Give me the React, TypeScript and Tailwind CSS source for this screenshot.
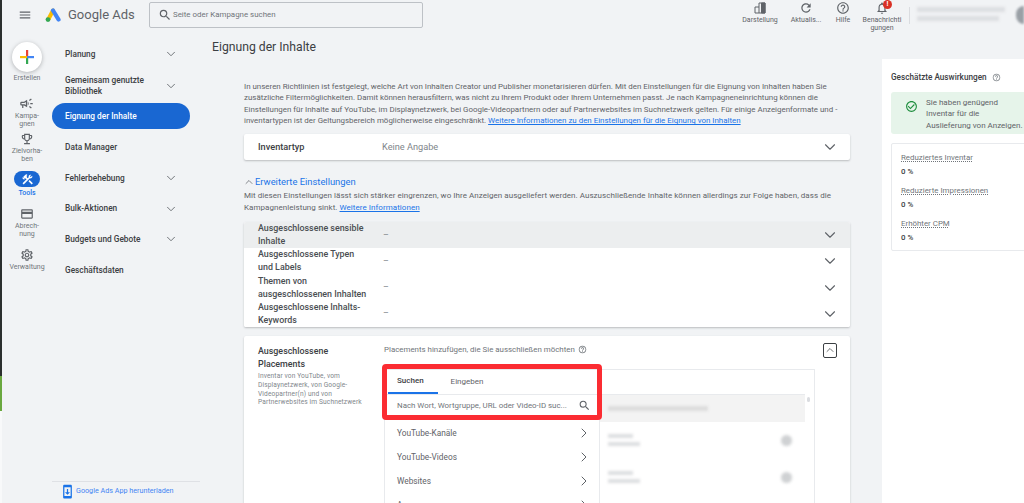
import { ChevronDown, ChevronRight, ChevronUp } from "lucide-react";
import {
  MdCheckCircleOutline,
  MdConstruction,
  MdCreditCard,
  MdHelpOutline,
  MdMenu,
  MdOutlineCampaign,
  MdOutlineEmojiEvents,
  MdOutlineNotifications,
  MdOutlineSettings,
  MdRefresh,
  MdSearch,
  MdSystemUpdate,
} from "react-icons/md";
import type { ReactNode } from "react";

const navItems = [
  { label: "Planung", cls: "h-[24px]", chevron: true },
  { label: "Gemeinsam genutzte Bibliothek", cls: "h-[37px] pt-[2px]", chevron: true },
  { label: "Eignung der Inhalte", cls: "h-[26px]", active: true },
  { label: "Data Manager", cls: "mt-[3px] h-[30.7px]" },
  { label: "Fehlerbehebung", cls: "h-[30.7px]", chevron: true },
  { label: "Bulk-Aktionen", cls: "h-[30.7px]", chevron: true },
  { label: "Budgets und Gebote", cls: "h-[30.7px]", chevron: true },
  { label: "Geschäftsdaten", cls: "h-[30.7px]" },
];

const railItems = [
  { icon: <MdOutlineCampaign size={15} />, label: <>Kampa-<br />gnen</>, cls: "mt-[14px]" },
  { icon: <MdOutlineEmojiEvents size={14} />, label: <>Zielvorha-<br />ben</>, cls: "mt-[3px]" },
  { icon: <MdConstruction size={13} />, label: "Tools", cls: "mt-[8px]", active: true },
  { icon: <MdCreditCard size={14} />, label: <>Abrech-<br />nung</>, cls: "mt-[9px]" },
  { icon: <MdOutlineSettings size={14} />, label: "Verwaltung", cls: "mt-[9px]" },
];

const excluded = [
  { a: "Ausgeschlossene sensible", b: "Inhalte", shaded: true },
  { a: "Ausgeschlossene Typen", b: "und Labels" },
  { a: "Themen von", b: "ausgeschlossenen Inhalten" },
  { a: "Ausgeschlossene Inhalts-", b: "Keywords" },
];

const impacts = ["Reduziertes Inventar", "Reduzierte Impressionen", "Erhöhter CPM"];

function TopAction({ icon, label, cls }: { icon: ReactNode; label: ReactNode; cls: string }) {
  return (
    <div className={`flex flex-col items-center text-center text-[7px] leading-[8px] text-[#5f6368] ${cls}`}>
      <div className="flex h-[14px] items-center justify-center">{icon}</div>
      <div className="mt-[1px] whitespace-nowrap">{label}</div>
    </div>
  );
}

function PlacementRow({ label }: { label: string }) {
  return (
    <div className="flex h-[24px] shrink-0 items-center justify-between pr-[7px] pl-[12px] text-[8.3px] text-[#5f6368]">
      <span>{label}</span>
      <ChevronRight className="h-[16px] w-[16px] text-[#5f6368]" strokeWidth={1.5} />
    </div>
  );
}

// the reference has these rows blurred out
function BlurRow() {
  return (
    <div className="flex h-[37px] items-center justify-between pr-[13px] pl-[8px] blur-[1.5px]">
      <div className="flex flex-col gap-[4px]">
        <div className="h-[4px] w-[25px] bg-[#dcdee0]" />
        <div className="h-[4px] w-[32px] bg-[#dcdee0]" />
      </div>
      <div className="h-[11px] w-[11px] rounded-full bg-[#cfd1d3]" />
    </div>
  );
}

export default function App() {
  return (
    <div className="flex h-[503px] w-[1024px] overflow-hidden bg-[#f1f3f5] font-['Roboto',sans-serif]">
      <div className="flex w-[2px] shrink-0 flex-col">
        <div className="h-[376px] bg-[#2b2f2e]" />
        <div className="h-[35px] bg-[#6aa83f]" />
        <div className="flex-1 bg-[#f8f9fa]" />
      </div>
      <div className="flex min-w-0 flex-1 flex-col">
        {/* top bar */}
        <header className="flex h-[39px] shrink-0 items-start pt-[1px]">
          <div className="flex h-[28px] w-[147px] shrink-0 items-center pl-[16px]">
            <MdMenu size={14} className="text-[#5f6368]" />
            <svg viewBox="0 0 16 14" className="ml-[13px] h-[14px] w-[16px]" aria-hidden>
              <path d="M8 2.5 L3.5 11" stroke="#fbbc04" strokeWidth="4" strokeLinecap="round" />
              <path d="M8 2.5 L13.5 11.5" stroke="#4285f4" strokeWidth="4.2" strokeLinecap="round" />
              <circle cx="3" cy="11.6" r="2.4" fill="#34a853" />
            </svg>
            <span className="ml-[7px] text-[13px] whitespace-nowrap text-[#5f6368]">Google Ads</span>
          </div>
          <div className="mt-[1px] flex h-[26px] w-[274px] shrink-0 items-center rounded-[2px] border border-[#bdc1c6] pl-[8px] text-[7.9px] text-[#70757a]">
            <MdSearch size={14} className="mr-[1px] text-[#5f6368]" />
            Seite oder Kampagne suchen
          </div>
          <div className="ml-auto flex items-start">
            <TopAction
              cls="w-[40px]"
              label="Darstellung"
              icon={
                <svg viewBox="0 0 12 12" className="h-[12px] w-[12px] fill-none stroke-[#5f6368]" aria-hidden>
                  <path d="M1 11V5h4V1h6v10z M5 5v6" strokeWidth="1" />
                  <path d="M7.5 1h3.5v10H7.5z" fill="#5f6368" />
                </svg>
              }
            />
            <TopAction cls="ml-[6px] w-[40px]" icon={<MdRefresh size={14} />} label="Aktualis..." />
            <TopAction cls="-ml-[3px] w-[40px]" icon={<MdHelpOutline size={14} />} label="Hilfe" />
            <div className="relative -ml-[2px] w-[42px]">
              <TopAction
                cls="w-[42px]"
                icon={<MdOutlineNotifications size={14} />}
                label={<>Benachrichti<br />gungen</>}
              />
              <div className="absolute -top-[1px] left-[22px] flex h-[9px] w-[9px] items-center justify-center rounded-full bg-[#d93025] text-[7px] leading-none font-bold text-white">
                !
              </div>
            </div>
            <div className="mt-[6px] ml-[6px] h-[17px] w-px bg-[#dadce0]" />
            <div className="mt-[6px] ml-[7px] flex w-[88px] flex-col gap-[4px] blur-[1.5px]">
              <div className="h-[5px] w-[88px] bg-[#dcdee1]" />
              <div className="h-[5px] w-[82px] bg-[#dcdee1]" />
            </div>
            <div className="mt-[5px] ml-[11px] h-[18px] w-[8px] rounded-l-full bg-[#9aa0a6] blur-[1px]" />
          </div>
        </header>

        <div className="flex min-h-0 flex-1">
          {/* icon rail */}
          <aside className="mt-[3px] flex w-[50px] shrink-0 flex-col items-center">
            <div className="flex h-[30px] w-[30px] items-center justify-center rounded-full bg-white shadow-[0_1px_4px_rgba(60,64,67,0.35)]">
              <svg viewBox="0 0 14 14" className="h-[14px] w-[14px]" aria-hidden>
                <rect x="6" y="0" width="2.2" height="7" fill="#ea4335" />
                <rect x="6" y="7" width="2.2" height="7" fill="#34a853" />
                <rect x="0" y="6" width="7" height="2.2" fill="#fbbc04" />
                <rect x="7" y="6" width="7" height="2.2" fill="#4285f4" />
              </svg>
            </div>
            <div className="mt-[2px] text-[7px] leading-[8px] text-[#70757a]">Erstellen</div>
            {railItems.map((item, i) => (
              <div key={i} className={`flex flex-col items-center text-center ${item.cls}`}>
                <div
                  className={
                    item.active
                      ? "flex h-[16px] w-[26px] items-center justify-center rounded-full bg-[#1967d2] text-white"
                      : "flex h-[15px] items-center justify-center text-[#5f6368]"
                  }
                >
                  {item.icon}
                </div>
                <div
                  className={
                    item.active
                      ? "mt-[2px] text-[7px] leading-[8px] font-medium text-[#1a73e8]"
                      : "mt-[1px] text-[7px] leading-[8px] text-[#70757a]"
                  }
                >
                  {item.label}
                </div>
              </div>
            ))}
          </aside>

          {/* section nav */}
          <nav className="mt-[3px] flex w-[148px] shrink-0 flex-col">
            {navItems.map((item) =>
              item.active ? (
                <div
                  key={item.label}
                  className="flex h-[26px] w-[138px] shrink-0 items-center rounded-full bg-[#1967d2] pl-[13px] text-[8.3px] font-medium text-white"
                >
                  {item.label}
                </div>
              ) : (
                <div
                  key={item.label}
                  className={`flex ${item.cls} w-[126px] shrink-0 items-center justify-between pl-[13px] text-[8.3px] leading-[11px] font-medium text-[#3c4043]`}
                >
                  <span className={item.chevron ? "max-w-[90px]" : ""}>{item.label}</span>
                  {item.chevron && <ChevronDown className="h-[14px] w-[14px] text-[#5f6368]" strokeWidth={1.5} />}
                </div>
              ),
            )}
            <div className="mt-auto flex h-[22px] items-center gap-[1px] border-t border-[#dfe1e5] pb-[2px] pl-[8px] text-[7.2px] text-[#4285f4]">
              <MdSystemUpdate size={15} className="text-[#1a73e8]" />
              Google Ads App herunterladen
            </div>
          </nav>

          {/* main content */}
          <main className="w-[682px] shrink-0 pl-[44px]">
            <h1 className="-ml-[32px] text-[12.2px] leading-[16px] text-[#3c4043]">Eignung der Inhalte</h1>
            <p className="mt-[26px] w-[596px] text-[7.93px] leading-[11.4px] text-[#5f6368]">
              In unseren Richtlinien ist festgelegt, welche Art von Inhalten Creator und Publisher monetarisieren dürfen. Mit den Einstellungen für die Eignung von Inhalten haben Sie zusätzliche Filtermöglichkeiten. Damit können herausfiltern, was nicht zu Ihrem Produkt oder Ihrem Unternehmen passt. Je nach Kampagneneinrichtung können die Einstellungen für Inhalte auf YouTube, im Displaynetzwerk, bei Google-Videopartnern oder auf Partnerwebsites im Suchnetzwerk gelten. Für einige Anzeigenformate und -inventartypen ist der Geltungsbereich möglicherweise eingeschränkt.{" "}
              <span className="text-[#1a73e8] underline">Weitere Informationen zu den Einstellungen für die Eignung von Inhalten</span>
            </p>

            <div className="mt-[7px] flex h-[26px] w-[606px] items-center rounded-[2px] bg-white pr-[11px] pl-[14px] text-[9.2px] shadow-[0_1px_2px_rgba(60,64,67,0.3)]">
              <span className="w-[124px] font-medium text-[#3c4043]">Inventartyp</span>
              <span className="flex-1 text-[#80868b]">Keine Angabe</span>
              <ChevronDown className="h-[18px] w-[18px] text-[#5f6368]" strokeWidth={1.5} />
            </div>

            <div className="mt-[16px] flex h-[12px] items-center">
              <ChevronUp className="-ml-[1px] h-[12px] w-[12px] shrink-0 text-[#5f6368]" strokeWidth={1.5} />
              <span className="text-[9.4px] text-[#1a73e8]">Erweiterte Einstellungen</span>
            </div>
            <p className="mt-[2.5px] w-[596px] text-[8px] leading-[11.4px] tracking-[0.05px] text-[#5f6368]">
              Mit diesen Einstellungen lässt sich stärker eingrenzen, wo Ihre Anzeigen ausgeliefert werden. Auszuschließende Inhalte können allerdings zur Folge haben, dass die Kampagnenleistung sinkt.{" "}
              <span className="text-[#1a73e8] underline">Weitere Informationen</span>
            </p>

            <div className="mt-[9px] w-[606px] overflow-hidden rounded-[2px] bg-white shadow-[0_1px_2px_rgba(60,64,67,0.3)]">
              {excluded.map((row) => (
                <div
                  key={row.a}
                  className={`flex h-[26.25px] items-center pr-[11px] pl-[14px] text-[8.9px] leading-[13px] font-medium text-[#4a4e52] ${row.shaded ? "bg-[#eceeef]" : "bg-white"}`}
                >
                  <span className="w-[125px] shrink-0">
                    {row.a}
                    <br />
                    {row.b}
                  </span>
                  <span className="flex-1 font-normal text-[#80868b]">–</span>
                  <ChevronDown className="h-[18px] w-[18px] text-[#5f6368]" strokeWidth={1.5} />
                </div>
              ))}
            </div>

            <section className="mt-[9px] flex h-[170px] w-[606px] rounded-[2px] bg-white shadow-[0_1px_2px_rgba(60,64,67,0.3)]">
              <div className="w-[140px] shrink-0 pt-[9px] pl-[14px]">
                <div className="text-[8.9px] leading-[13px] font-medium text-[#3c4043]">
                  Ausgeschlossene
                  <br />
                  Placements
                </div>
                <div className="mt-[1px] text-[6.6px] leading-[8.8px] tracking-[0.13px] whitespace-nowrap text-[#80868b]">
                  Inventar von YouTube, vom
                  <br />
                  Displaynetzwerk, von Google-
                  <br />
                  Videopartner(n) und von
                  <br />
                  Partnerwebsites im Suchnetzwerk
                </div>
              </div>
              <div className="min-w-0 flex-1 pr-[13px]">
                <div className="flex h-[33px] items-start justify-between">
                  <div className="mt-[8px] flex items-center gap-[3px] text-[7.9px] leading-[12px] text-[#70757a]">
                    Placements hinzufügen, die Sie ausschließen möchten
                    <MdHelpOutline size={9} />
                  </div>
                  <div className="mt-[7px] flex h-[15px] w-[14px] items-center justify-center rounded-[2px] border border-[#3c4043]">
                    <ChevronUp className="h-[12px] w-[12px] text-[#3c4043]" strokeWidth={1.5} />
                  </div>
                </div>
                <div className="relative flex h-[137px] w-[431px] border border-b-0 border-[#e8eaed]">
                  <div className="w-[215px] shrink-0 overflow-hidden border-r border-[#e8eaed]">
                    <div className="flex h-[25px] border-b border-[#e8eaed] pl-[3px] text-[8px]">
                      <div className="flex w-[50px] items-center border-b-2 border-[#1a73e8] pl-[9px] font-medium text-[#3c4043]">
                        Suchen
                      </div>
                      <div className="ml-[4px] flex w-[50px] items-center justify-center text-[#5f6368]">Eingeben</div>
                    </div>
                    <div className="flex h-[21px] items-center justify-between pr-[8px] pl-[12px] text-[7.9px] text-[#70757a]">
                      <span className="whitespace-nowrap">Nach Wort, Wortgruppe, URL oder Video-ID suc...</span>
                      <MdSearch size={13} className="text-[#5f6368]" />
                    </div>
                    <div className="mt-[5px]">
                      <PlacementRow label="YouTube-Kanäle" />
                      <PlacementRow label="YouTube-Videos" />
                      <PlacementRow label="Websites" />
                      <PlacementRow label="Apps" />
                    </div>
                  </div>
                  <div className="flex min-w-0 flex-1">
                    <div className="min-w-0 flex-1">
                      <div className="h-[25px] border-b border-[#e8eaed]" />
                      <div className="flex h-[27px] items-center bg-[#f3f3f3] pl-[8px]">
                        <div className="h-[5px] w-[100px] bg-[#dcdcdc] blur-[1.5px]" />
                      </div>
                      <BlurRow />
                      <BlurRow />
                    </div>
                    <div className="w-[9px] shrink-0 pt-[27px]">
                      <div className="ml-[2px] h-[5px] w-[3px] rounded-full bg-[#dadce0]" />
                    </div>
                  </div>
                  {/* red callout drawn on top of the screenshot */}
                  <div className="pointer-events-none absolute -top-[6px] -left-[3px] h-[56px] w-[220px] rounded-[4px] border-[5px] border-[#fb2c32]" />
                </div>
              </div>
            </section>
          </main>

          {/* impact panel */}
          <aside className="mt-[20px] min-w-0 flex-1 overflow-hidden bg-white pt-[12px] pl-[9px]">
            <div className="flex h-[12px] items-center gap-[5px] text-[8.2px] whitespace-nowrap text-[#3c4043]">
              <span className="font-medium">Geschätzte Auswirkungen</span>
              <MdHelpOutline size={9} className="text-[#80868b]" />
            </div>
            <div className="mt-[9px] flex h-[42px] w-[140px] items-center rounded-[3px] bg-[#e6f4ea] pt-[2px] pl-[14px]">
              <MdCheckCircleOutline size={13} className="mb-[16px] shrink-0 text-[#1e8e3e]" />
              <div className="ml-[8px] text-[8px] leading-[11.5px] whitespace-nowrap text-[#5f6368]">
                Sie haben genügend
                <br />
                Inventar für die
                <br />
                Auslieferung von Anzeigen.
              </div>
            </div>
            <div className="mt-[9px] h-[108px] w-[140px] rounded-[2px] border border-[#e8eaed] pt-[8px] pl-[9px]">
              {impacts.map((label) => (
                <div key={label} className="mb-[8px]">
                  <div className="text-[7.9px] leading-[11px] text-[#70757a] underline decoration-dotted">{label}</div>
                  <div className="mt-[3px] text-[7.9px] leading-[11px] font-medium text-[#3c4043]">0 %</div>
                </div>
              ))}
            </div>
          </aside>
        </div>
      </div>
    </div>
  );
}
